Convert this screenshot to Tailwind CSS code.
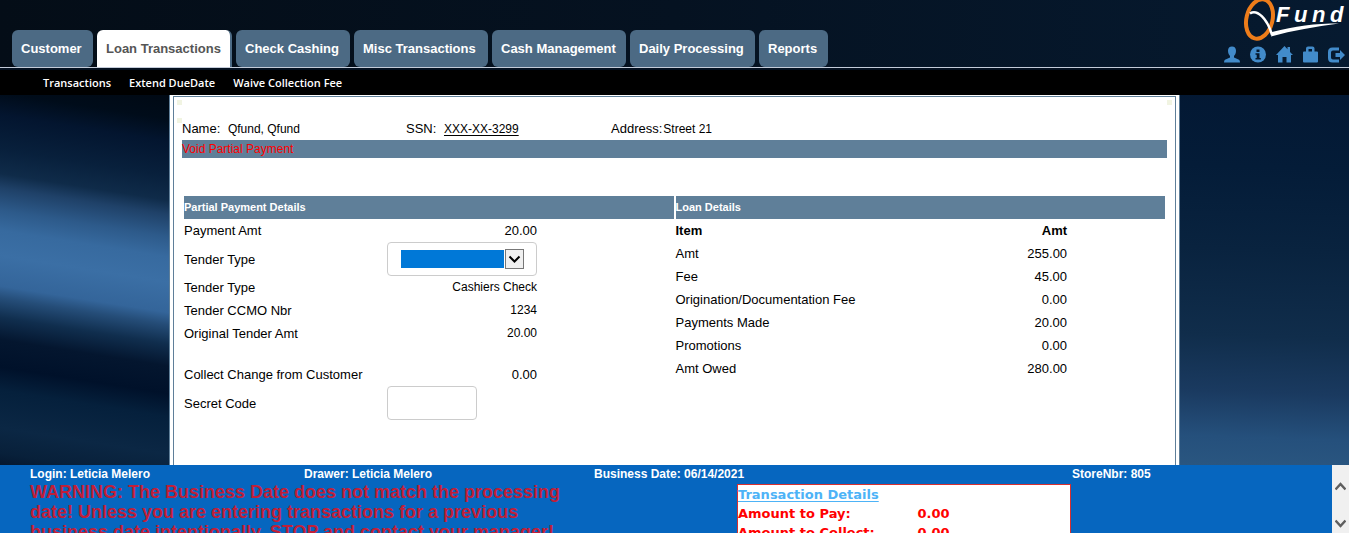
<!DOCTYPE html>
<html lang="en">
<head>
<meta charset="utf-8">
<title>QFund - Void Partial Payment</title>
<script src="https://cdn.jsdelivr.net/npm/@tailwindcss/browser@4"></script>
</head>
<body class="flex h-screen flex-col overflow-hidden bg-black font-['Liberation_Sans',Arial,sans-serif] text-[13px] text-black">

<header class="relative flex shrink-0 items-end justify-between border-b border-[#c3cbd9] bg-linear-to-r from-[#040d17] via-[#051221] to-[#061a30] pt-[30px] pl-3">
  <nav aria-label="Main" class="flex gap-1 text-[13px] leading-[37px] font-bold text-white">
    <a href="#" class="w-[81px] rounded-md bg-[#4c6a84] pl-[9px]">Customer</a>
    <a href="#" class="w-[135px] rounded-md rounded-b-none border-r-2 border-[#4c6a84] bg-white pl-[9px] text-[#555]">Loan Transactions</a>
    <a href="#" class="w-[114px] rounded-md bg-[#4c6a84] pl-[9px]">Check Cashing</a>
    <a href="#" class="w-[134px] rounded-md bg-[#4c6a84] pl-[9px]">Misc Transactions</a>
    <a href="#" class="w-[134px] rounded-md bg-[#4c6a84] pl-[9px]">Cash Management</a>
    <a href="#" class="w-[125px] rounded-md bg-[#4c6a84] pl-[9px]">Daily Processing</a>
    <a href="#" class="w-[69px] rounded-md bg-[#4c6a84] pl-[9px]">Reports</a>
  </nav>
  <svg class="absolute top-0 right-0" width="114" height="44" viewBox="0 0 114 44" role="img" aria-label="QFund">
    <ellipse cx="24.500" cy="19" rx="13" ry="20" transform="rotate(14 24.500 19)" fill="none" stroke="#ee7d1a" stroke-width="4"/>
    <path d="M15 13.500C22 9 32 18 37 35" fill="none" stroke="#fff" stroke-width="2.500"/>
    <path d="M37 32C60 26 80 23.500 104 23.500C80 26.500 58 30.500 36 36.500Z" fill="#fff"/>
    <text y="22" font-family="Liberation Sans Narrow, Liberation Sans" font-size="22" font-weight="bold" font-style="italic" fill="#fff"><tspan x="41">F</tspan><tspan x="59">u</tspan><tspan x="77">n</tspan><tspan x="95">d</tspan></text>
  </svg>
  <div class="flex gap-[10px] pr-1 pb-1 text-[#428bca]">
    <a href="#" aria-label="User"><svg width="16" height="17" viewBox="0 0 16 17" fill="currentColor"><path d="M8 0.500C5.500 0.500 4 2 4 4.800C4 7.300 5 9 6 10V11.500L1 13.700Q0 14.200 0 16.500H16Q16 14.200 15 13.700L10 11.500V10C11 9 12 7.300 12 4.800C12 2 10.500 0.500 8 0.500Z"/></svg></a>
    <a href="#" aria-label="Information"><svg width="16" height="17" viewBox="0 0 16 17"><circle cx="8" cy="8.500" r="8" fill="currentColor"/><path d="M6.500 3.500H9.500V6H6.500ZM5.500 7.300H9.500V12H10.800V13.500H5.500V12H6.700V8.800H5.500Z" fill="#06182c"/></svg></a>
    <a href="#" aria-label="Home"><svg width="17" height="17" viewBox="0 0 17 17" fill="currentColor"><path d="M8.500 0L11.500 3.200V1H14V6L17 9H15V16.500H10.500V11H6.500V16.500H2V9H0Z"/></svg></a>
    <a href="#" aria-label="Store"><svg width="15" height="17" viewBox="0 0 15 17" fill="currentColor"><path fill-rule="evenodd" d="M3 5.500V2.500Q3 0.500 5 0.500H9.500Q11.500 0.500 11.500 2.500V5.500H14Q15 5.500 15 6.500V15.500Q15 16.500 14 16.500H1Q0 16.500 0 15.500V6.500Q0 5.500 1 5.500ZM5.500 5.500H9V3H5.500Z"/></svg></a>
    <a href="#" aria-label="Log out"><svg width="17" height="17" viewBox="0 0 17 17" fill="currentColor"><path d="M11 1.500H4.500Q0 1.500 0 6V12Q0 16.500 4.500 16.500H11V13.500H5Q3 13.500 3 11.500V6.500Q3 4.500 5 4.500H11Z"/><path d="M7.500 7H12V4L17 9L12 14V11H7.500Z"/></svg></a>
  </div>
</header>

<nav aria-label="Loan transactions" class="flex shrink-0 gap-[18px] border-t-2 border-[#04101f] bg-black pl-[43px] font-['Open_Sans',sans-serif] text-[11px] leading-[25px] font-semibold text-white">
  <a href="#">Transactions</a>
  <a href="#">Extend DueDate</a>
  <a href="#">Waive Collection Fee</a>
</nav>

<div class="flex min-h-0 flex-1">
  <div class="w-[169px] shrink-0 bg-[linear-gradient(189deg,#000914_0px,#000c1a_24px,#03152f_46px,#08203c_80px,#0f2b49_104px,#1f4168_118px,#2d5a8a_140px,#376a9f_160px,#3b6fa5_185px,#34659a_215px,#254d78_227px,#102e4e_246px,#04162f_268px,#00112a_295px,#05203c_318px,#0b2744_355px,#08203a_380px,#04152c_396px)]"></div>

  <main class="min-w-0 flex-1 border-x border-[#5f7f99] bg-white px-[3px] pt-px">
    <div class="relative h-full border-x border-t border-[#5f7f99] px-2 pt-[22px]">
      <i class="absolute top-[3px] left-[3px] size-[5px] bg-[#f1f4e2]"></i>
      <i class="absolute top-[21px] left-[3px] size-[5px] bg-[#f1f4e2]"></i>
      <i class="absolute top-[3px] right-[3px] size-[5px] bg-[#f1f4e2]"></i>

      <div class="flex pb-px leading-5">
        <div class="w-56">Name: <span class="ml-1 text-xs">Qfund, Qfund</span></div>
        <div class="w-[205px]">SSN: <a href="#" class="ml-1 text-xs underline underline-offset-2">XXX-XX-3299</a></div>
        <div>Address:<span class="ml-px text-xs">Street 21</span></div>
      </div>
      <h1 class="bg-[#5f7f99] text-xs leading-[18px] text-[red]">Void Partial Payment</h1>

      <div class="mx-[2px] mt-[38px] flex gap-[2px]">
        <section class="flex-1">
          <h2 class="bg-[#5f7f99] text-[11px] leading-[23px] font-bold text-white">Partial Payment Details</h2>
          <dl class="grid w-[353px] grid-cols-[203px_1fr] leading-[23px]">
            <dt>Payment Amt</dt><dd class="text-right">20.00</dd>
            <dt class="flex items-center"><label for="tender">Tender Type</label></dt>
            <dd class="relative">
              <select id="tender" class="block h-[34px] w-full appearance-none rounded border border-[#ccc] bg-white bg-[linear-gradient(#0078d7,#0078d7)] bg-size-[103px_18px] bg-position-[13px_7px] bg-no-repeat px-3"><option></option></select>
              <svg class="pointer-events-none absolute top-[7px] right-3" width="20" height="20" viewBox="0 0 20 20"><rect x="0.500" y="0.500" width="18" height="19" fill="#f0f0f0" stroke="#777"/><path d="M4.500 7.500L9.500 12.500L14.500 7.500" fill="none" stroke="#000" stroke-width="2"/></svg>
            </dd>
            <dt>Tender Type</dt><dd class="text-right text-xs leading-[23px]">Cashiers Check</dd>
            <dt>Tender CCMO Nbr</dt><dd class="text-right text-xs leading-[23px]">1234</dd>
            <dt>Original Tender Amt</dt><dd class="text-right text-xs leading-[23px]">20.00</dd>
            <dt class="pt-[18px]">Collect Change from Customer</dt><dd class="pt-[18px] text-right">0.00</dd>
            <dt class="flex items-center"><label for="code">Secret Code</label></dt>
            <dd><input id="code" type="password" class="block h-[34px] w-[90px] rounded border border-[#ccc] px-2"></dd>
          </dl>
        </section>
        <section class="flex-1">
          <h2 class="bg-[#5f7f99] text-[11px] leading-[23px] font-bold text-white">Loan Details</h2>
          <table class="w-4/5 leading-[23px]">
            <thead><tr><th class="text-left">Item</th><th class="text-right">Amt</th></tr></thead>
            <tbody>
              <tr><td>Amt</td><td class="text-right">255.00</td></tr>
              <tr><td>Fee</td><td class="text-right">45.00</td></tr>
              <tr><td>Origination/Documentation Fee</td><td class="text-right">0.00</td></tr>
              <tr><td>Payments Made</td><td class="text-right">20.00</td></tr>
              <tr><td>Promotions</td><td class="text-right">0.00</td></tr>
              <tr><td>Amt Owed</td><td class="text-right">280.00</td></tr>
            </tbody>
          </table>
        </section>
      </div>
    </div>
  </main>

  <div class="w-[169px] shrink-0 bg-[linear-gradient(182deg,#031833,#041c38_20%,#09233f_42%,#102d4b_65%,#1a3a60_80%,#25507c_92%,#2a5680)]"></div>
</div>

<footer class="flex h-[68px] shrink-0 overflow-hidden bg-[#0666bf]">
  <div class="min-w-0 flex-1 pl-[30px]">
    <div class="flex text-xs leading-[19px] font-bold text-white">
      <span class="w-[274px]">Login: Leticia Melero</span>
      <span class="w-[290px]">Drawer: Leticia Melero</span>
      <span class="w-[478px]">Business Date: 06/14/2021</span>
      <span>StoreNbr: 805</span>
    </div>
    <div class="flex items-start">
      <p class="-mt-0.5 w-[707px] pr-[160px] text-[18px] leading-5 font-bold text-[#c01f38]">WARNING: The Business Date does not match the processing date! Unless you are entering transactions for a previous business date intentionally, STOP and contact your manager!</p>
      <table class="w-[334px] border border-[#d9302f] bg-white font-['DejaVu_Sans',Verdana,sans-serif] text-[13px] leading-[19px] font-bold text-[red]">
        <tbody>
          <tr><td colspan="2"><a href="#" class="text-[#4db3f7] underline underline-offset-2">Transaction Details</a></td></tr>
          <tr><td class="w-[180px]">Amount to Pay:</td><td>0.00</td></tr>
          <tr><td>Amount to Collect:</td><td>0.00</td></tr>
        </tbody>
      </table>
    </div>
  </div>
  <div class="flex w-[17px] shrink-0 flex-col items-center justify-between bg-[#f0f0f0] pt-[17px] pb-[5px]">
    <button type="button" aria-label="Scroll up"><svg class="block" width="11" height="9" viewBox="0 0 11 9" fill="none" stroke="#5f5f5f" stroke-width="2.500"><path d="M0.500 7.500L5.500 2L10.500 7.500"/></svg></button>
    <button type="button" aria-label="Scroll down"><svg class="block" width="11" height="9" viewBox="0 0 11 9" fill="none" stroke="#5f5f5f" stroke-width="2.500"><path d="M0.500 1.500L5.500 7L10.500 1.500"/></svg></button>
  </div>
</footer>
</body>
</html>
